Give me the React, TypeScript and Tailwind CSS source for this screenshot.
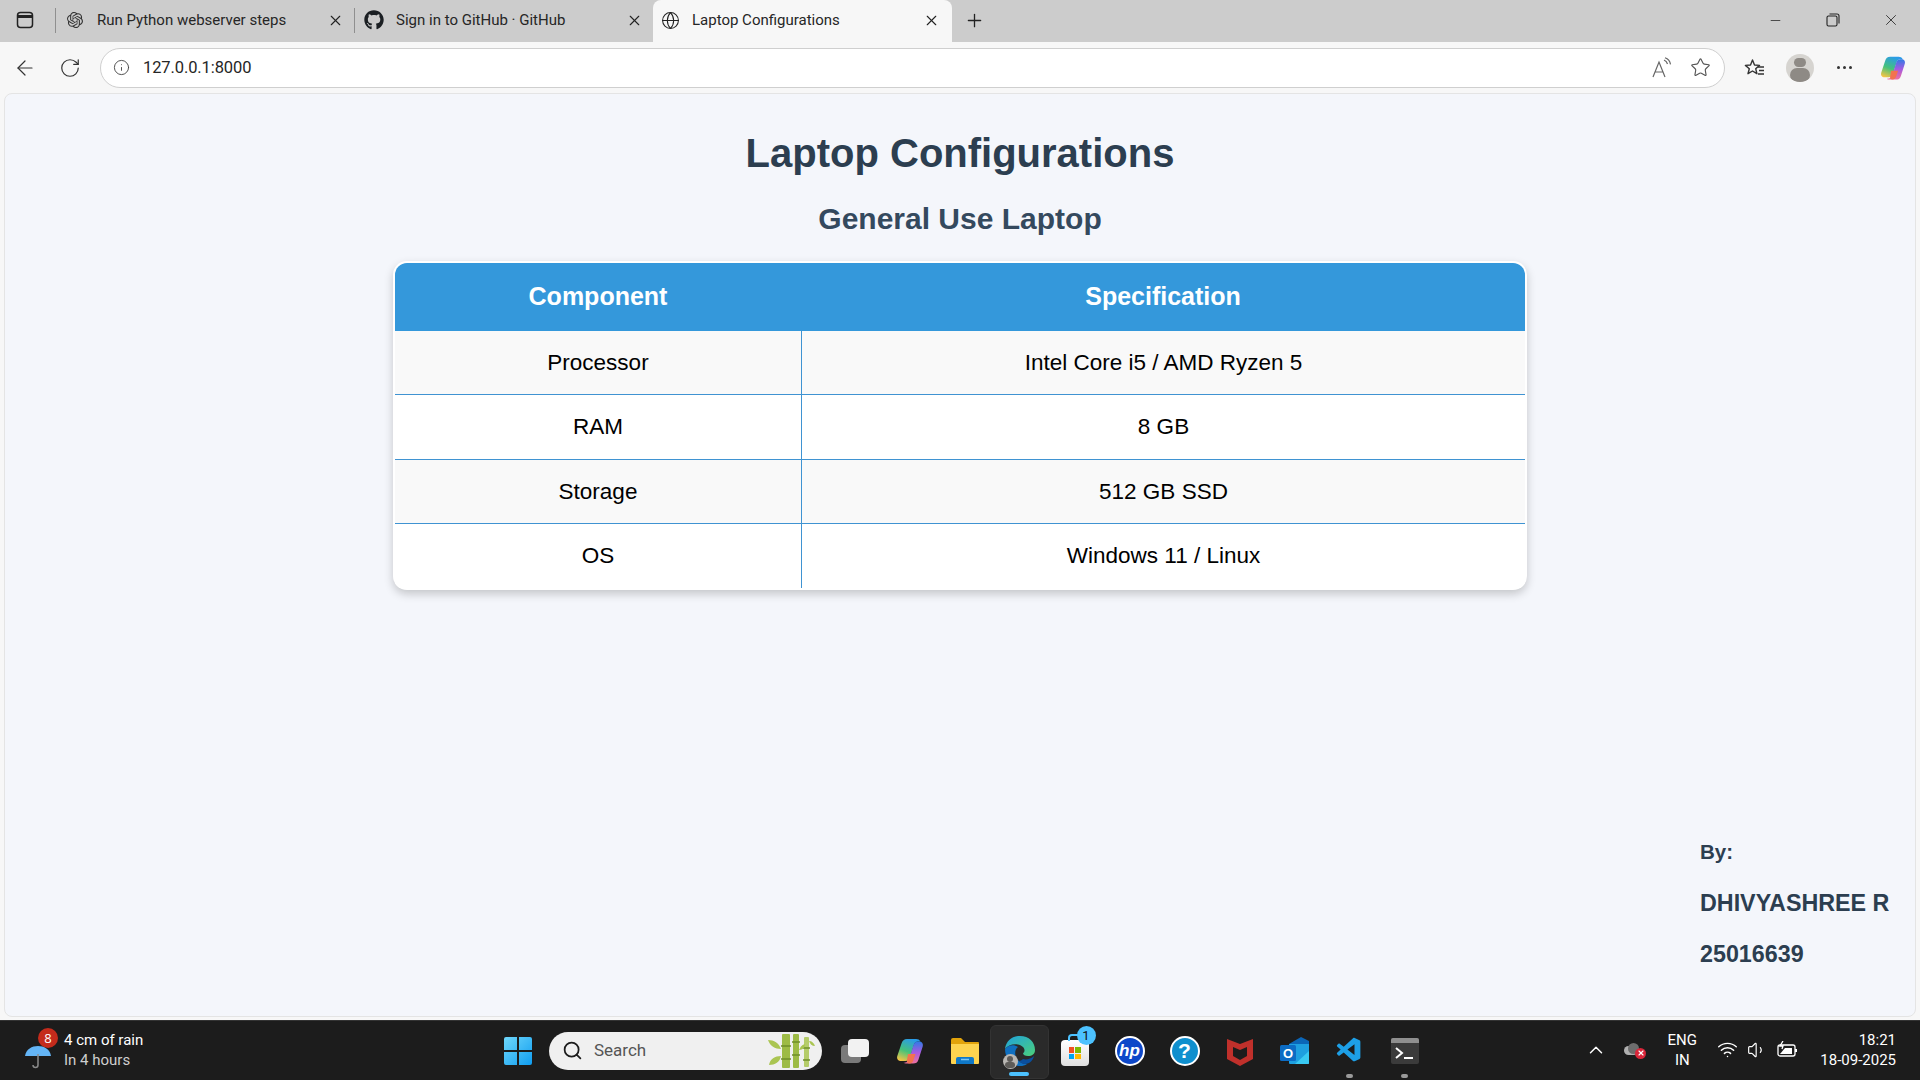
import { ArrowLeft, RotateCw, Info, Star, Plus, Globe, X, Minus, Search, ChevronUp, Wifi, Volume1 } from "lucide-react";
import { FaGithub } from "react-icons/fa";
import { SiOpenai } from "react-icons/si";
import { VscVscode } from "react-icons/vsc";

const specs = [
  { name: "Processor", value: "Intel Core i5 / AMD Ryzen 5", height: "h-[64px] border-b" },
  { name: "RAM", value: "8 GB", height: "h-[65px] border-b" },
  { name: "Storage", value: "512 GB SSD", height: "h-[64px] border-b" },
  { name: "OS", value: "Windows 11 / Linux", height: "h-[64px]" },
];

function CopilotIcon({ size = 26 }: { size?: number }) {
  return (
    <svg width={size} height={size} viewBox="0 0 28 28">
      <defs>
        <linearGradient id="cpA" x1="0.6" y1="0" x2="0.2" y2="1">
          <stop offset="0" stopColor="#2a9be8" />
          <stop offset="0.55" stopColor="#45c27a" />
          <stop offset="1" stopColor="#f6c445" />
        </linearGradient>
        <linearGradient id="cpB" x1="0.5" y1="0" x2="0.5" y2="1">
          <stop offset="0" stopColor="#2f7be6" />
          <stop offset="0.5" stopColor="#a65be0" />
          <stop offset="1" stopColor="#f0709c" />
        </linearGradient>
      </defs>
      <path d="M11 2h9c2 0 3.500.8 4.500 2.500H22c-2 0-3.500 1-4 3l-4 13c-.8 2.500-2.200 3.500-4.500 3.500H5c-3 0-4.500-2.200-3.700-5L5.500 6.500C6.500 3.500 8 2 11 2z" fill="url(#cpA)" />
      <path d="M22 4.500h1c3 0 4.500 2.200 3.700 5l-4.200 13c-1 3-2.500 4-5.500 4H10c-1 0-1.800-.2-2.500-.7 1-.2 4.500-.3 5.500-2.800l4.500-15c.7-2.500 2.500-3.500 4.500-3.500z" fill="url(#cpB)" />
      <path d="M12 17h7.500l-2 6c-.6 2-2 3.500-4 3.500-2.500 0-3-2-2.500-3.500z" fill="#f2734e" />
    </svg>
  );
}

function ReadAloudIcon() {
  return (
    <svg width="22" height="22" viewBox="0 0 22 22" fill="none" stroke="#666" strokeWidth="1.200">
      <path d="M2 20 8 5l6 15M4.500 15h7" />
      <path d="M13 3c2 .8 3 2 3.500 4M14 .8c3 1 5 3.500 5.500 6.500" />
    </svg>
  );
}

function FavoritesIcon() {
  return (
    <svg width="22" height="22" viewBox="0 0 22 22" fill="none" stroke="#333" strokeWidth="1.400">
      <path d="m9.500 3 2 5 5 .4-3.800 3.300 1.200 5-4.400-2.700L5 16.700l1.300-5-3.900-3.300 5.100-.4z" strokeLinejoin="round" />
      <path d="M15 10h6M16 13.500h5M15 17h6" />
    </svg>
  );
}

function ProfileIcon() {
  return (
    <div className="w-7 h-7 rounded-full bg-[#d6d4d0] overflow-hidden flex flex-col items-center">
      <div className="w-3 h-3 mt-1 rounded-full bg-[#8e8a85]" />
      <div className="w-5 h-4 mt-[1px] rounded-full bg-[#8e8a85]" />
    </div>
  );
}

function Tab({ icon, title, active }: { icon: React.ReactNode; title: string; active?: boolean }) {
  return (
    <div
      className={`flex items-center w-[299px] ${
        active
          ? "h-full pl-[7px] pr-[12px] pb-[2px] bg-[#f7f7f7] rounded-t-lg"
          : "h-[25px] mb-[2px] pl-[9px] pr-[10px] border-l border-[#8f8f8f]"
      }`}
    >
      <span className="w-5 h-5 flex items-center justify-center shrink-0">{icon}</span>
      <span className="ml-[12px] flex-1 text-[15px] text-[#262626] truncate">{title}</span>
      <X size={17} strokeWidth={1.6} className="text-[#222]" />
    </div>
  );
}

function TitleBar() {
  return (
    <div className="h-[42px] bg-[#cccccc] flex items-center shrink-0">
      <div className="w-[55px] pl-[16px] pb-[2px]">
        <svg width="18" height="18" viewBox="0 0 18 18" fill="none" stroke="#222" strokeWidth="1.500">
          <rect x="1.500" y="1.500" width="15" height="15" rx="3" />
          <path d="M1.500 5.500h15" strokeWidth="3" />
        </svg>
      </div>
      <div className="h-full flex items-center">
        <Tab icon={<SiOpenai size={16} className="text-[#333]" />} title="Run Python webserver steps" />
        <Tab icon={<FaGithub size={20} className="text-[#1b1f23]" />} title="Sign in to GitHub · GitHub" />
        <Tab active icon={<Globe size={19} strokeWidth={1.3} className="text-[#222]" />} title="Laptop Configurations" />
      </div>
      <Plus size={21} strokeWidth={1.5} className="ml-[12px] mb-[2px] text-[#222]" />
      <div className="ml-auto flex items-center pb-[2px] text-[#222]">
        <span className="w-[58px] flex justify-center"><Minus size={15} strokeWidth={1.2} /></span>
        <span className="w-[58px] flex justify-center">
          <svg width="14" height="14" viewBox="0 0 14 14" fill="none" stroke="#222" strokeWidth="1.100">
            <rect x="1" y="3" width="10" height="10" rx="1.500" />
            <path d="M3.500 1h7.500c1.200 0 2 .8 2 2v7.500" />
          </svg>
        </span>
        <span className="w-[58px] flex justify-center"><X size={18} strokeWidth={1.1} /></span>
      </div>
    </div>
  );
}

function Toolbar() {
  return (
    <div className="h-[51px] bg-[#f7f7f7] flex items-center shrink-0 pl-[13px] pr-[13px]">
      <ArrowLeft size={24} strokeWidth={1.2} className="text-[#333]" />
      <RotateCw size={22} strokeWidth={1.3} className="ml-[22px] text-[#333]" />
      <div className="ml-[19px] w-[1625px] h-[40px] bg-white border border-[#cfcfcf] rounded-full flex items-center pl-[12px] pr-[13px]">
        <Info size={17} strokeWidth={1.3} className="text-[#444]" />
        <span className="ml-[13px] pt-[1px] text-[16.500px] tracking-[-0.1px] text-[#262626]">127.0.0.1:8000</span>
        <span className="ml-auto mr-[-3px]"><ReadAloudIcon /></span>
        <Star size={21} strokeWidth={1.3} className="ml-[20px] text-[#555]" />
      </div>
      <span className="ml-[18px]"><FavoritesIcon /></span>
      <span className="ml-[21px]"><ProfileIcon /></span>
      <span className="ml-[18px] w-6 flex justify-center gap-[3px]">
        <i className="w-[3px] h-[3px] rounded-full bg-[#333]" />
        <i className="w-[3px] h-[3px] rounded-full bg-[#333]" />
        <i className="w-[3px] h-[3px] rounded-full bg-[#333]" />
      </span>
      <span className="ml-[24px]"><CopilotIcon /></span>
    </div>
  );
}

function SpecTable() {
  return (
    <div className="mt-[25px] w-[1134px] bg-white rounded-[14px] p-[2px] shadow-[0_4px_10px_rgba(0,0,0,0.2)] overflow-hidden">
      <div className="bg-[#3498db] h-[68px] rounded-t-[12px] grid grid-cols-[406px_1fr] items-center text-center text-white font-bold text-[25px]">
        <div>Component</div>
        <div>Specification</div>
      </div>
      {specs.map((row, i) => (
        <div
          key={row.name}
          className={`grid grid-cols-[407px_1fr] text-center text-black text-[22.500px] ${
            i % 2 === 0 ? "bg-[#f9f9f9]" : "bg-white"
          }`}
        >
          <div className={`flex items-center justify-center border-r border-[#3f93d2] ${row.height}`}>{row.name}</div>
          <div className={`flex items-center justify-center border-[#3f93d2] ${row.height}`}>{row.value}</div>
        </div>
      ))}
    </div>
  );
}

function TaskIcon({ children, active, dot }: { children: React.ReactNode; active?: boolean; dot?: boolean }) {
  return (
    <div className="relative w-[55px] h-[56px] flex items-center justify-center">
      {active && <div className="absolute inset-x-[-2px] top-[2px] bottom-0 bg-[#2a2a2a] rounded-md border border-[#333]" />}
      <div className="relative">{children}</div>
      {active && <div className="absolute bottom-[3px] left-[17px] w-[20px] h-[4px] rounded bg-[#4cc2ff]" />}
      {dot && <div className="absolute bottom-[1px] left-[24px] w-[7px] h-[4px] rounded bg-[#9a9a9a]" />}
    </div>
  );
}

function WindowsLogo() {
  return (
    <svg width="30" height="30" viewBox="0 0 30 30">
      <defs>
        <linearGradient id="win" x1="0" y1="0" x2="1" y2="1">
          <stop offset="0" stopColor="#6fd7fb" />
          <stop offset="1" stopColor="#0f9df0" />
        </linearGradient>
      </defs>
      <path d="M1 3a2 2 0 0 1 2-2h11v13H1zM16 1h11a2 2 0 0 1 2 2v11H16zM1 16h13v13H3a2 2 0 0 1-2-2zM16 16h13v11a2 2 0 0 1-2 2H16z" fill="url(#win)" />
    </svg>
  );
}

function BambooIcon() {
  return (
    <svg width="48" height="36" viewBox="0 0 48 36">
      <g fill="#9dbb45">
        <rect x="14" y="1" width="8" height="34" rx="1" />
        <rect x="25" y="1" width="6" height="34" rx="1" />
        <rect x="36" y="4" width="5" height="30" rx="1" fill="#b5cc6a" />
      </g>
      <g stroke="#6f8f2a" strokeWidth="1.500">
        <path d="M13 13h10M13 26h10M24 9h8M24 22h8M35 15h7M35 27h7" />
      </g>
      <path d="M0 7c6 0 11 3 13 9-6 0-11-3-13-9zM1 32c1-6 6-9 12-9-1 6-6 9-12 9zM31 17c2-4 3-5 6-6 0 3-2 6-6 6zM41 8c3 0 5 2 6 5-3 0-5-2-6-5z" fill="#aac552" />
    </svg>
  );
}

function Explorer() {
  return (
    <svg width="30" height="28" viewBox="0 0 30 28">
      <path d="M1 3a2 2 0 0 1 2-2h8l4 4h13a1 1 0 0 1 1 1v3H1z" fill="#e2a30b" />
      <path d="M1 7h28v19a1 1 0 0 1-1 1H2a1 1 0 0 1-1-1z" fill="#fdd34f" />
      <path d="M6 27v-5a2 2 0 0 1 2-2h14a2 2 0 0 1 2 2v5z" fill="#0f78c8" />
      <path d="M11 22.500h8" stroke="#7cc6f5" strokeWidth="1.500" />
    </svg>
  );
}

function EdgeIcon() {
  return (
    <div className="relative w-[32px] h-[32px]">
      <svg width="32" height="32" viewBox="0 0 32 32">
        <defs>
          <linearGradient id="edge" x1="0" y1="0" x2="1" y2="1">
            <stop offset="0" stopColor="#1fa2dd" />
            <stop offset="1" stopColor="#4cd07a" />
          </linearGradient>
        </defs>
        <path d="M1 14C2 6 8 1 16 1c9 0 15 6 15 14 0 4-3 6-7 6-3 0-5-1-5-3 2-1 2-4 0-6-4-4-14-4-18 2z" fill="url(#edge)" />
        <path d="M1 14c3-4 9-5 13-2-3 2-4 7-1 12 2 3 6 5 10 5-2 1.500-4 2-7 2C8 31 1 24 1 14z" fill="#0f6fc0" />
        <path d="M19 24c3 1 8 0 11-3-1 4-4 8-9 8-3 0-5-2-6-3 1 0 3-1 4-2z" fill="#0a4f9e" />
      </svg>
      <div className="absolute -left-[1px] bottom-[-2px] w-[15px] h-[15px] rounded-full bg-[#b9b7b3] flex flex-col items-center overflow-hidden">
        <div className="w-[6px] h-[6px] mt-[2px] rounded-full bg-[#5d5b58]" />
        <div className="w-[10px] h-[6px] rounded-full bg-[#5d5b58]" />
      </div>
    </div>
  );
}

function StoreIcon() {
  return (
    <div className="relative w-[28px] h-[26px] mt-[5px] bg-gradient-to-b from-white to-[#e0e0e0] rounded-[4px] flex items-center justify-center">
      <div className="absolute -top-[6px] left-[7px] w-[14px] h-[7px] border-2 border-b-0 border-[#4cc2ff] rounded-t-sm" />
      <div className="grid grid-cols-2 gap-[1px] w-[12px]">
        <i className="h-[5.500px] bg-[#f25022]" />
        <i className="h-[5.500px] bg-[#7fba00]" />
        <i className="h-[5.500px] bg-[#00a4ef]" />
        <i className="h-[5.500px] bg-[#ffb900]" />
      </div>
      <div className="absolute -top-[14px] right-[-7px] w-[19px] h-[19px] rounded-full bg-[#4cc2ff] text-[#111] text-[13px] leading-[19px] text-center">1</div>
    </div>
  );
}

function HpIcon() {
  return (
    <div className="w-[30px] h-[30px] rounded-full bg-[#0d47c9] border-2 border-white flex items-center justify-center text-white italic font-bold text-[17px] leading-none font-['Liberation_Sans',sans-serif]">
      hp
    </div>
  );
}

function HelpIcon() {
  return (
    <div className="w-[30px] h-[30px] rounded-full bg-[#0f8fce] border-2 border-white flex items-center justify-center text-white font-bold text-[21px] leading-none font-['Liberation_Sans',sans-serif]">
      ?
    </div>
  );
}

function McAfeeIcon() {
  return (
    <svg width="26" height="30" viewBox="0 0 26 30">
      <path d="M0 3l13 5 13-5v20l-13 7-13-7zM6 11v9l7 4 7-4v-9l-7 3z" fill="#c0302b" fillRule="evenodd" />
    </svg>
  );
}

function OutlookIcon() {
  return (
    <svg width="30" height="28" viewBox="0 0 30 28">
      <path d="M9 7 21 0l8 4v8H9z" fill="#0b66b8" />
      <path d="M9 7h20v19a1 1 0 0 1-1 1H10a1 1 0 0 1-1-1z" fill="#1e9fe0" />
      <path d="M15 27 29 14v12a1 1 0 0 1-1 1z" fill="#39c9f2" />
      <rect x="0" y="8" width="16" height="16" rx="1.500" fill="#0c6cc4" />
      <text x="8" y="20.500" textAnchor="middle" fontSize="13" fontWeight="700" fill="#fff" fontFamily="Liberation Sans">O</text>
    </svg>
  );
}

function TerminalIcon() {
  return (
    <svg width="28" height="26" viewBox="0 0 28 26">
      <rect width="28" height="26" rx="2" fill="#3b3b3b" />
      <path d="M0 2a2 2 0 0 1 2-2h24a2 2 0 0 1 2 2v3H0z" fill="#8f8f8f" />
      <path d="m5 10 6 5-6 5" stroke="#fff" strokeWidth="2" fill="none" />
      <path d="M13 20h9" stroke="#fff" strokeWidth="2" />
    </svg>
  );
}

function Taskbar() {
  return (
    <div className="h-[60px] bg-[#1c1c1c] border-t border-[#333] flex items-center shrink-0 text-white relative">
      {/* weather */}
      <div className="w-[490px] pl-[24px] flex items-center shrink-0">
        <div className="relative w-[30px] h-[34px]">
          <svg width="28" height="34" viewBox="0 0 28 34" className="absolute left-0 top-[2px]">
            <path d="M1 20C2 13 8 10 14 10s12 3 13 10z" fill="#64b5f6" />
            <path d="M14 18v11a2.500 2.500 0 0 1-5 0" stroke="#8a8a8a" strokeWidth="1.500" fill="none" />
          </svg>
          <div className="absolute left-[14px] -top-[6px] w-[20px] h-[20px] rounded-full bg-[#c42b1c] text-[13px] leading-[20px] text-center font-['Open_Sans',sans-serif]">8</div>
        </div>
        <div className="ml-[10px] -mt-[2px] text-[15px] leading-[20px]">
          <div>4 cm of rain</div>
          <div className="text-[#cfcfcf]">In 4 hours</div>
        </div>
      </div>
      {/* centre icons */}
      <TaskIcon><WindowsLogo /></TaskIcon>
      <div className="ml-[4px] w-[273px] h-[38px] rounded-full bg-[#f0f0f0] flex items-center pl-[13px] pr-[6px] text-[#444]">
        <Search size={21} strokeWidth={2} className="text-[#1c1c1c]" />
        <span className="ml-[11px] text-[17px] text-[#555]">Search</span>
        <span className="ml-auto"><BambooIcon /></span>
      </div>
      <div className="ml-[5px] flex items-center">
        <TaskIcon>
          <div className="relative w-[28px] h-[24px]">
            <div className="absolute left-0 bottom-0 w-[20px] h-[18px] bg-[#7a7a7a] rounded-sm" />
            <div className="absolute right-0 top-0 w-[21px] h-[18px] bg-[#f2f2f2] rounded-sm" />
          </div>
        </TaskIcon>
        <TaskIcon><CopilotIcon size={28} /></TaskIcon>
        <TaskIcon><Explorer /></TaskIcon>
        <TaskIcon active><EdgeIcon /></TaskIcon>
        <TaskIcon><StoreIcon /></TaskIcon>
        <TaskIcon><HpIcon /></TaskIcon>
        <TaskIcon><HelpIcon /></TaskIcon>
        <TaskIcon><McAfeeIcon /></TaskIcon>
        <TaskIcon><OutlookIcon /></TaskIcon>
        <TaskIcon dot><VscVscode size={29} className="text-[#1d9fe6]" /></TaskIcon>
        <TaskIcon dot><TerminalIcon /></TaskIcon>
      </div>
      {/* tray */}
      <div className="ml-auto -mt-[2px] flex items-center pr-[24px] text-[15px]">
        <ChevronUp size={22} strokeWidth={1.6} />
        <div className="relative ml-[17px] w-[20px] h-[14px]">
          <div className="absolute left-0 top-[3px] w-[14px] h-[9px] rounded-full bg-[#b0b0b0]" />
          <div className="absolute left-[4px] top-0 w-[11px] h-[11px] rounded-full bg-[#6d6d6d]" />
          <div className="absolute left-[11px] top-[5px] w-[11px] h-[11px] rounded-full bg-[#d9263a] flex items-center justify-center">
            <X size={8} strokeWidth={3.5} />
          </div>
        </div>
        <div className="ml-[22px] w-[32px] text-center leading-[20px]">
          <div>ENG</div>
          <div>IN</div>
        </div>
        <Wifi size={21} strokeWidth={1.7} className="ml-[19px]" />
        <Volume1 size={20} strokeWidth={1.4} className="ml-[9px]" />
        <svg width="22" height="18" viewBox="0 0 22 18" className="ml-[10px]" fill="none" stroke="#fff" strokeWidth="1.300">
          <rect x="1" y="4" width="17" height="11" rx="2" />
          <path d="M19 8v3" strokeWidth="2" />
          <path d="M3 13l5-6h7v6z" fill="#fff" stroke="none" />
          <path d="M6 0 3 5h3l-1 3" />
        </svg>
        <div className="ml-[21px] text-right leading-[20px]">
          <div>18:21</div>
          <div>18-09-2025</div>
        </div>
      </div>
    </div>
  );
}

export default function App() {
  return (
    <div className="w-[1920px] h-[1080px] flex flex-col overflow-hidden bg-[#f7f7f7] font-['Roboto',sans-serif]">
      <TitleBar />
      <Toolbar />
      <div className="flex-1 min-h-0 px-[4px] pb-[3px]">
        <div className="h-full bg-[#f4f6fb] border border-[#e4e4e4] rounded-lg flex flex-col items-center font-['Liberation_Sans',sans-serif]">
          <h1 className="mt-[36px] text-[40px] leading-[46px] font-bold text-[#2c3e50]">Laptop Configurations</h1>
          <h2 className="mt-[26px] text-[30px] leading-[34px] font-bold text-[#34495e]">General Use Laptop</h2>
          <SpecTable />
          <div className="mt-auto mb-[49px] self-start ml-[1695px] text-[23.300px] font-bold text-[#2c3e50]">
            <div className="text-[20.500px] leading-[26px]">By:</div>
            <div className="mt-[25px] leading-[26px]">DHIVYASHREE R</div>
            <div className="mt-[25px] leading-[26px]">25016639</div>
          </div>
        </div>
      </div>
      <Taskbar />
    </div>
  );
}
